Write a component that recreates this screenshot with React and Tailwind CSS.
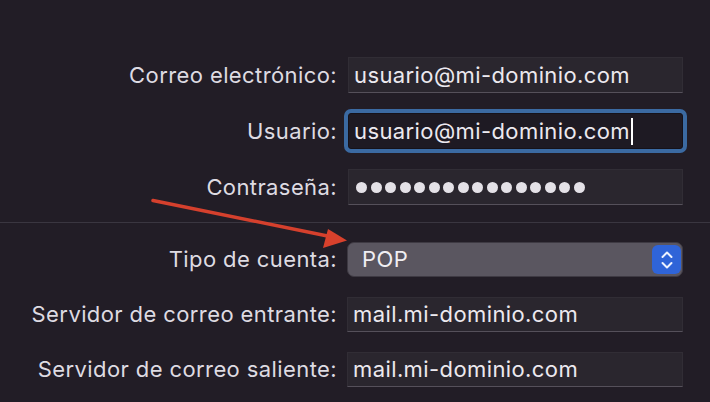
import React from "react";

const font = { fontFamily: "Inter, 'Noto Sans', sans-serif" };

function Label({ children }) {
  return (
    <div className="flex items-center justify-end text-[22px] tracking-[0.4px] text-[#dedbe2]">
      {children}
    </div>
  );
}

function Field({ children, h = "h-[36px]" }) {
  return (
    <div
      className={`flex ${h} items-center border border-[#312d35] border-b-[#55505a] bg-[#2a262e] pl-[5px] text-[22px] tracking-[0.4px] text-[#ece9ef]`}
    >
      {children}
    </div>
  );
}

function FocusedField({ children }) {
  return (
    <div className="flex h-[36px] items-center rounded-[3px] border border-[#15121a] bg-[#1e1a23] pl-[5px] text-[22px] tracking-[0.4px] text-[#ece9ef] shadow-[0_0_0_4px_#3b6aa2]">
      {children}
    </div>
  );
}

function PasswordDots({ count }) {
  return (
    <div className="flex gap-[3.5px] pl-[2px]">
      {Array.from({ length: count }).map((_, i) => (
        <span key={i} className="h-[11px] w-[11px] rounded-full bg-[#e4e1e7]" />
      ))}
    </div>
  );
}

function SelectBox({ value }) {
  return (
    <div className="flex h-[35px] items-center justify-between rounded-[7px] border border-[#3e3a43] bg-[#5a5660] pl-[14px] pr-[1px] text-[22px] tracking-[0.4px] text-[#f0eef2]">
      <span>{value}</span>
      <div className="flex h-[29px] w-[29px] items-center justify-center rounded-[6px] bg-[#2f64d8]">
        <svg width="14" height="22" viewBox="0 0 14 22" fill="none">
          <path d="M2.5 8 L7 3.5 L11.5 8" stroke="#eef3ff" strokeWidth="2" strokeLinecap="round" strokeLinejoin="round" />
          <path d="M2.5 14 L7 18.5 L11.5 14" stroke="#eef3ff" strokeWidth="2" strokeLinecap="round" strokeLinejoin="round" />
        </svg>
      </div>
    </div>
  );
}

function Arrow() {
  return (
    <svg className="pointer-events-none absolute left-0 top-0" width="710" height="402" viewBox="0 0 710 402">
      <line x1="153" y1="200.5" x2="330" y2="236.5" stroke="#d5402d" strokeWidth="3.5" strokeLinecap="round" />
      <polygon points="347,240.5 328,229 323,248" fill="#d8412c" />
    </svg>
  );
}

export default function App() {
  return (
    <div className="relative h-[402px] w-[710px] overflow-hidden bg-[#221d26] pt-[57px]" style={font}>
      <div className="grid grid-cols-[337px_335px] gap-x-[11px] gap-y-[20px]">
        <Label>Correo electrónico:</Label>
        <Field>usuario@mi-dominio.com</Field>

        <Label>Usuario:</Label>
        <FocusedField>
          <span>usuario@mi-dominio.com</span>
          <span className="ml-[1px] inline-block h-[27px] w-[2px] bg-white" />
        </FocusedField>

        <Label>Contraseña:</Label>
        <Field>
          <PasswordDots count={16} />
        </Field>
      </div>

      <div className="mt-[17px] h-px w-full bg-[#3a3640]" />

      <div className="mt-[19px] grid grid-cols-[337px_336px] gap-x-[10px] gap-y-[20px]">
        <Label>Tipo de cuenta:</Label>
        <SelectBox value="POP" />

        <Label>Servidor de correo entrante:</Label>
        <Field h="h-[35px]">mail.mi-dominio.com</Field>

        <Label>Servidor de correo saliente:</Label>
        <Field h="h-[35px]">mail.mi-dominio.com</Field>
      </div>

      <Arrow />
    </div>
  );
}
